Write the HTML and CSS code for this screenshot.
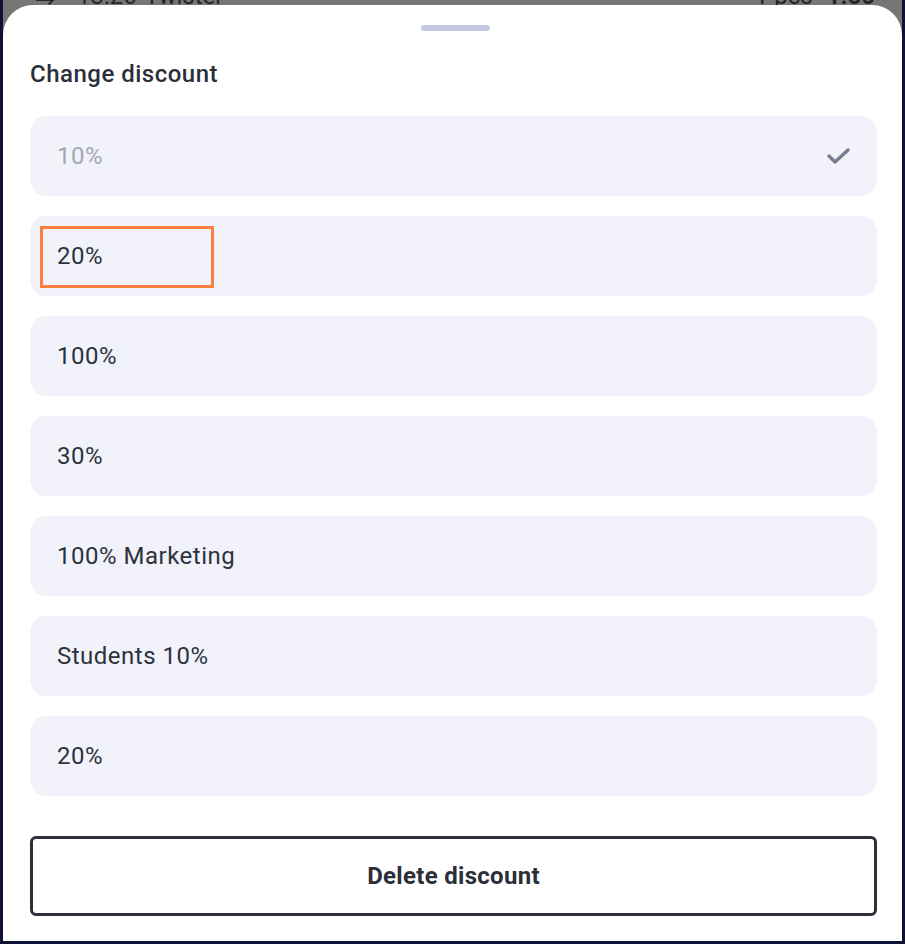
FILE: index.html
```html
<!DOCTYPE html>
<html>
<head>
<meta charset="utf-8">
<link rel="stylesheet" href="styles.css">
</head>
<body>
<div class="frame">
  <div class="status">
    <div class="status-row">
      <div class="status-left"><span class="sync">⇆</span><span>13:26</span><span>Twister</span></div>
      <div class="status-right"><span>1 pcs</span><b>1.50</b></div>
    </div>
  </div>
  <div class="sheet">
    <div class="handle"></div>
    <div class="title">Change discount</div>
    <div class="list">
      <div class="item selected">
        <span>10%</span>
        <svg class="check" width="24" height="18" viewBox="0 0 24 18"><path d="M2 9 L8 15 L21 3" fill="none" stroke="#7b7e92" stroke-width="3.4" stroke-linecap="round" stroke-linejoin="round"/></svg>
      </div>
      <div class="item focus-host">
        <span>20%</span>
        <div class="focus-box"></div>
      </div>
      <div class="item"><span>100%</span></div>
      <div class="item"><span>30%</span></div>
      <div class="item"><span>100% Marketing</span></div>
      <div class="item"><span>Students 10%</span></div>
      <div class="item"><span>20%</span></div>
    </div>
    <button class="delete">Delete discount</button>
  </div>
</div>
</body>
</html>
```
FILE: styles.css
```css
* { box-sizing: border-box; }
html, body { margin: 0; padding: 0; }
body {
  background: #0f1235;
  width: 905px;
  height: 944px;
  overflow: hidden;
  font-family: Roboto, "Noto Sans", sans-serif;
}
.frame {
  margin: 0 3px;
  height: 941px;
  background: #767676;
  display: flex;
  flex-direction: column;
}
.status {
  height: 5px;
  overflow: hidden;
  flex: none;
}
.status-row {
  margin-top: -16px;
  height: 24px;
  line-height: 24px;
  font-size: 24px;
  color: #262626;
  display: flex;
  justify-content: space-between;
  padding: 0 27px 0 32px;
}
.status-left, .status-right { display: flex; gap: 8px; }
.status-left .sync { margin-right: 14px; }
.status-right b { margin-left: 6px; }
.sheet {
  flex: 1;
  background: #ffffff;
  border-radius: 30px 30px 0 0;
  padding: 20px 25px 0 27px;
  display: flex;
  flex-direction: column;
}
.handle {
  align-self: center;
  width: 69px;
  height: 6px;
  border-radius: 3px;
  background: #c5c8e3;
  margin-left: 4px;
}
.title {
  margin-top: 29px;
  font-size: 24px;
  line-height: 28px;
  font-weight: 500;
  letter-spacing: 0.5px;
  color: #2c2f3a;
}
.list {
  margin-top: 28px;
  display: flex;
  flex-direction: column;
  gap: 20px;
}
.item {
  height: 80px;
  border-radius: 16px;
  background: #f1f2fa;
  display: flex;
  align-items: center;
  justify-content: space-between;
  padding: 0 27px 0 27px;
  font-size: 24px;
  letter-spacing: 0.5px;
  color: #2e323d;
}
.item.selected { color: #a5a7b7; }
.check { margin-top: -1px; margin-right: -1px; }
.focus-host { position: relative; }
.focus-box {
  position: absolute;
  left: 10px;
  top: 10px;
  width: 174px;
  height: 62px;
  border: 3px solid #ff7f3f;
}
.delete {
  margin-top: 40px;
  height: 80px;
  border: 3px solid #2b2f3a;
  border-radius: 6px;
  background: #ffffff;
  font-family: Roboto, "Noto Sans", sans-serif;
  font-size: 24px;
  font-weight: 700;
  letter-spacing: 0.3px;
  color: #2b2f3a;
  padding: 0;
}
```
